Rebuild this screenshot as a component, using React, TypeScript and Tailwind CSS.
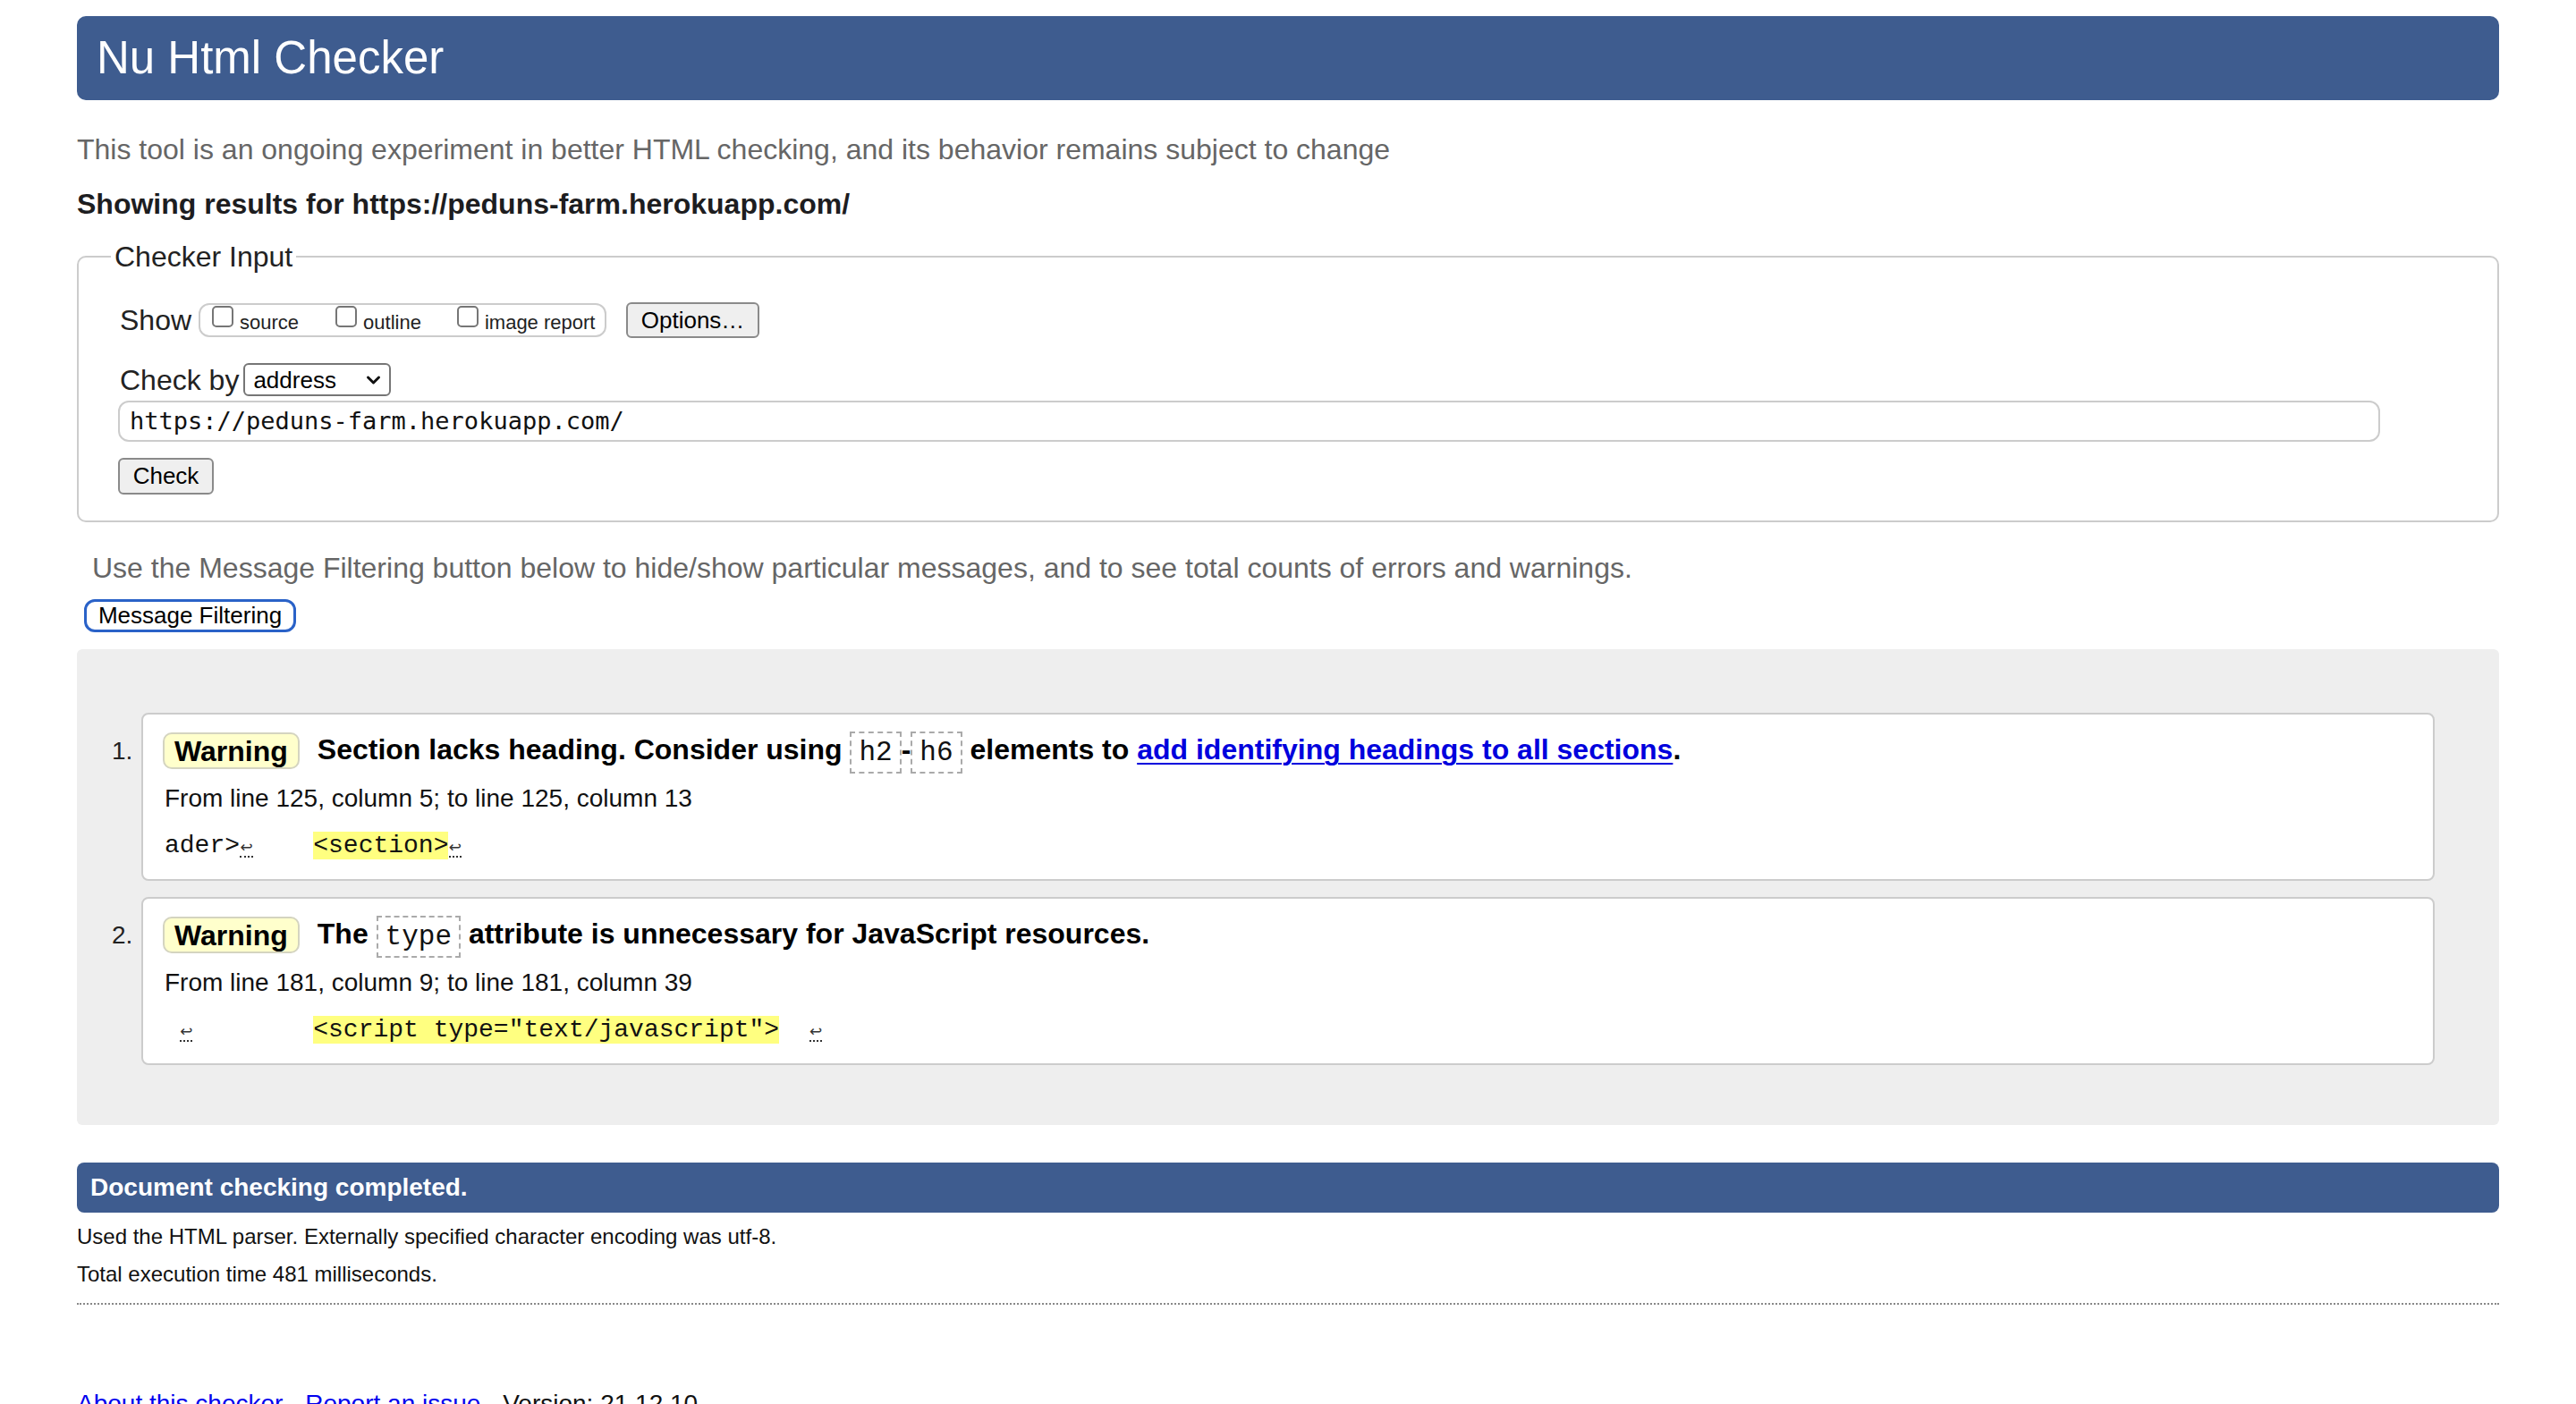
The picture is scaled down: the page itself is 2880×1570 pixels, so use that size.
import React from "react";

const sans = { fontFamily: '"Liberation Sans", Arial, sans-serif' };

function Lf() {
  return (
    <span className="inline-block w-[15px] text-center align-baseline">
      <span
        className="inline-block border-b-2 border-dotted border-[#333] text-[17px] leading-[20px] text-[#333]"
        style={{ fontFamily: '"DejaVu Sans", sans-serif' }}
      >
        ↩
      </span>
    </span>
  );
}

function Code({ children }: { children: React.ReactNode }) {
  return (
    <code
      className="inline-block border-2 border-dashed border-[#aaa] px-[8px] align-middle text-[31px] font-normal leading-[43px] text-[#111]"
      style={{ fontFamily: '"Liberation Mono", monospace' }}
    >
      {children}
    </code>
  );
}

function Badge() {
  return (
    <span className="mr-[20px] inline-flex h-[41px] items-center rounded-[10px] border-2 border-[#d4d4c0] bg-[#ffffcc] px-[11px] text-[32px] font-bold text-black">
      Warning
    </span>
  );
}

function Checkbox() {
  return <span className="mt-[1px] inline-block h-[24px] w-[24px] shrink-0 rounded-[5px] border-2 border-[#767676] bg-white" />;
}

export default function App() {
  return (
    <div className="min-h-[1570px] bg-white px-[86px] pt-[18px] text-black" style={sans}>
      {/* Header */}
      <h1 className="flex h-[94px] items-center rounded-[10px] bg-[#3e5c8f] pl-[22px] text-[51px] font-normal text-white">
        Nu Html Checker
      </h1>

      <p className="mt-[36px] text-[32px] leading-[38px] text-[#666]">
        This tool is an ongoing experiment in better HTML checking, and its behavior remains subject to change
      </p>

      <p className="mt-[23px] text-[32px] font-bold leading-[38px] text-[#1d1d1f]">
        Showing results for https://peduns-farm.herokuapp.com/
      </p>

      {/* Checker input */}
      <fieldset className="mt-[21px] rounded-[10px] border-2 border-[#ccc] pb-[29px] pl-[44px] pr-[44px]">
        <legend className="ml-[-8px] px-[4px] text-[32px] leading-[38px] text-[#222]">Checker Input</legend>

        <div className="mt-[32px] flex h-[40px] items-center">
          <span className="ml-[2px] text-[32px] leading-[38px] text-[#222]">Show</span>
          <div className="ml-[8px] flex h-[38px] w-[456px] items-start rounded-[12px] border-2 border-[#ccc] pl-[13px]">
            <Checkbox />
            <span className="ml-[7px] mt-[7px] text-[22px] leading-[26px] text-[#222]">source</span>
            <span className="ml-[41px]" />
            <Checkbox />
            <span className="ml-[7px] mt-[7px] text-[22px] leading-[26px] text-[#222]">outline</span>
            <span className="ml-[40px]" />
            <Checkbox />
            <span className="ml-[7px] mt-[7px] text-[22px] leading-[26px] text-[#222]">image report</span>
          </div>
          <button className="ml-[22px] flex h-[40px] w-[149px] items-center justify-center rounded-[6px] border-2 border-[#8a8a8a] bg-[#efefef] text-[26px] text-black">
            Options…
          </button>
        </div>

        <div className="mt-[28px] flex h-[37px] items-center">
          <span className="ml-[2px] text-[32px] leading-[38px] text-[#222]">Check by</span>
          <div className="ml-[5px] flex h-[37px] w-[165px] items-center justify-between rounded-[6px] border-2 border-[#767676] bg-white pl-[9px] pr-[9px]">
            <span className="text-[26px] leading-[30px] text-black">address</span>
            <svg width="17" height="12" viewBox="0 0 17 12">
              <path d="M2.5 3 L8.5 9 L14.5 3" fill="none" stroke="#111" strokeWidth="3" strokeLinecap="round" strokeLinejoin="round" />
            </svg>
          </div>
        </div>

        <div className="mt-[5px] flex h-[46px] w-[2529px] items-center rounded-[12px] border-2 border-[#ccc] bg-white pl-[11px]">
          <span className="text-[27px] text-[#111]" style={{ fontFamily: '"DejaVu Sans Mono", monospace' }}>
            https://peduns-farm.herokuapp.com/
          </span>
        </div>

        <button className="mt-[18px] flex h-[41px] w-[107px] items-center justify-center rounded-[6px] border-2 border-[#8a8a8a] bg-[#efefef] text-[26px] text-black">
          Check
        </button>
      </fieldset>

      <p className="mt-[32px] pl-[17px] text-[32px] leading-[38px] text-[#666]">
        Use the Message Filtering button below to hide/show particular messages, and to see total counts of errors and warnings.
      </p>

      <button className="ml-[8px] mt-[16px] flex h-[37px] w-[237px] items-center justify-center rounded-[12px] border-[3px] border-[#2a62c8] bg-white text-[26px] text-black">
        Message Filtering
      </button>

      {/* Results */}
      <div className="mt-[19px] rounded-[6px] bg-[#eeeeee] pb-[67px] pl-[39px] pr-[72px] pt-[71px]">
        <ol className="flex flex-col gap-[18px]">
          <li className="flex">
            <div className="w-[33px] shrink-0 pt-[19px] text-[28px] leading-[47px] text-[#222]">1.</div>
            <div className="flex-1 rounded-[8px] border-2 border-[#ccc] bg-white pb-[20px] pl-[22px] pt-[17px]">
              <div className="flex h-[47px] items-center text-[32px] font-bold text-black">
                <Badge />
                <span className="whitespace-pre">
                  Section lacks heading. Consider using <Code>h2</Code>-<Code>h6</Code> elements to{" "}
                  <a className="text-[#0000dd] underline underline-offset-[4px] decoration-2" href="#">
                    add identifying headings to all sections
                  </a>
                  .
                </span>
              </div>
              <p className="ml-[2px] mt-[13px] text-[28px] leading-[34px] text-[#111]">
                From line 125, column 5; to line 125, column 13
              </p>
              <p
                className="ml-[2px] mt-[19px] whitespace-pre text-[28px] leading-[34px] text-[#111]"
                style={{ fontFamily: '"Liberation Mono", monospace' }}
              >
                ader&gt;<Lf />{"    "}
                <span className="bg-[#ffff80]">&lt;section&gt;</span>
                <Lf />
              </p>
            </div>
          </li>
          <li className="flex">
            <div className="w-[33px] shrink-0 pt-[19px] text-[28px] leading-[47px] text-[#222]">2.</div>
            <div className="flex-1 rounded-[8px] border-2 border-[#ccc] bg-white pb-[20px] pl-[22px] pt-[17px]">
              <div className="flex h-[47px] items-center text-[32px] font-bold text-black">
                <Badge />
                <span className="whitespace-pre">
                  The <Code>type</Code> attribute is unnecessary for JavaScript resources.
                </span>
              </div>
              <p className="ml-[2px] mt-[13px] text-[28px] leading-[34px] text-[#111]">
                From line 181, column 9; to line 181, column 39
              </p>
              <p
                className="ml-[2px] mt-[19px] whitespace-pre text-[28px] leading-[34px] text-[#111]"
                style={{ fontFamily: '"Liberation Mono", monospace' }}
              >
                {" "}
                <Lf />
                {"        "}
                <span className="bg-[#ffff80]">&lt;script type="text/javascript"&gt;</span>
                {"  "}
                <Lf />
              </p>
            </div>
          </li>
        </ol>
      </div>

      {/* Completed */}
      <div className="mt-[42px] flex h-[56px] items-center rounded-[8px] bg-[#3e5c8f] pl-[15px] text-[28px] font-bold text-white">
        Document checking completed.
      </div>
      <p className="mt-[12px] text-[24px] leading-[30px] text-[#111]">
        Used the HTML parser. Externally specified character encoding was utf-8.
      </p>
      <p className="mt-[12px] text-[24px] leading-[30px] text-[#111]">Total execution time 481 milliseconds.</p>
      <hr className="mt-[17px] border-0 border-t-2 border-dotted border-[#888]" />

      <p className="mt-[94px] text-[28px] leading-[34px] text-[#111]">
        <a className="text-[#0000ee]" href="#">About this checker</a> · <a className="text-[#0000ee]" href="#">Report an issue</a> · Version: 21.12.10
      </p>
    </div>
  );
}
